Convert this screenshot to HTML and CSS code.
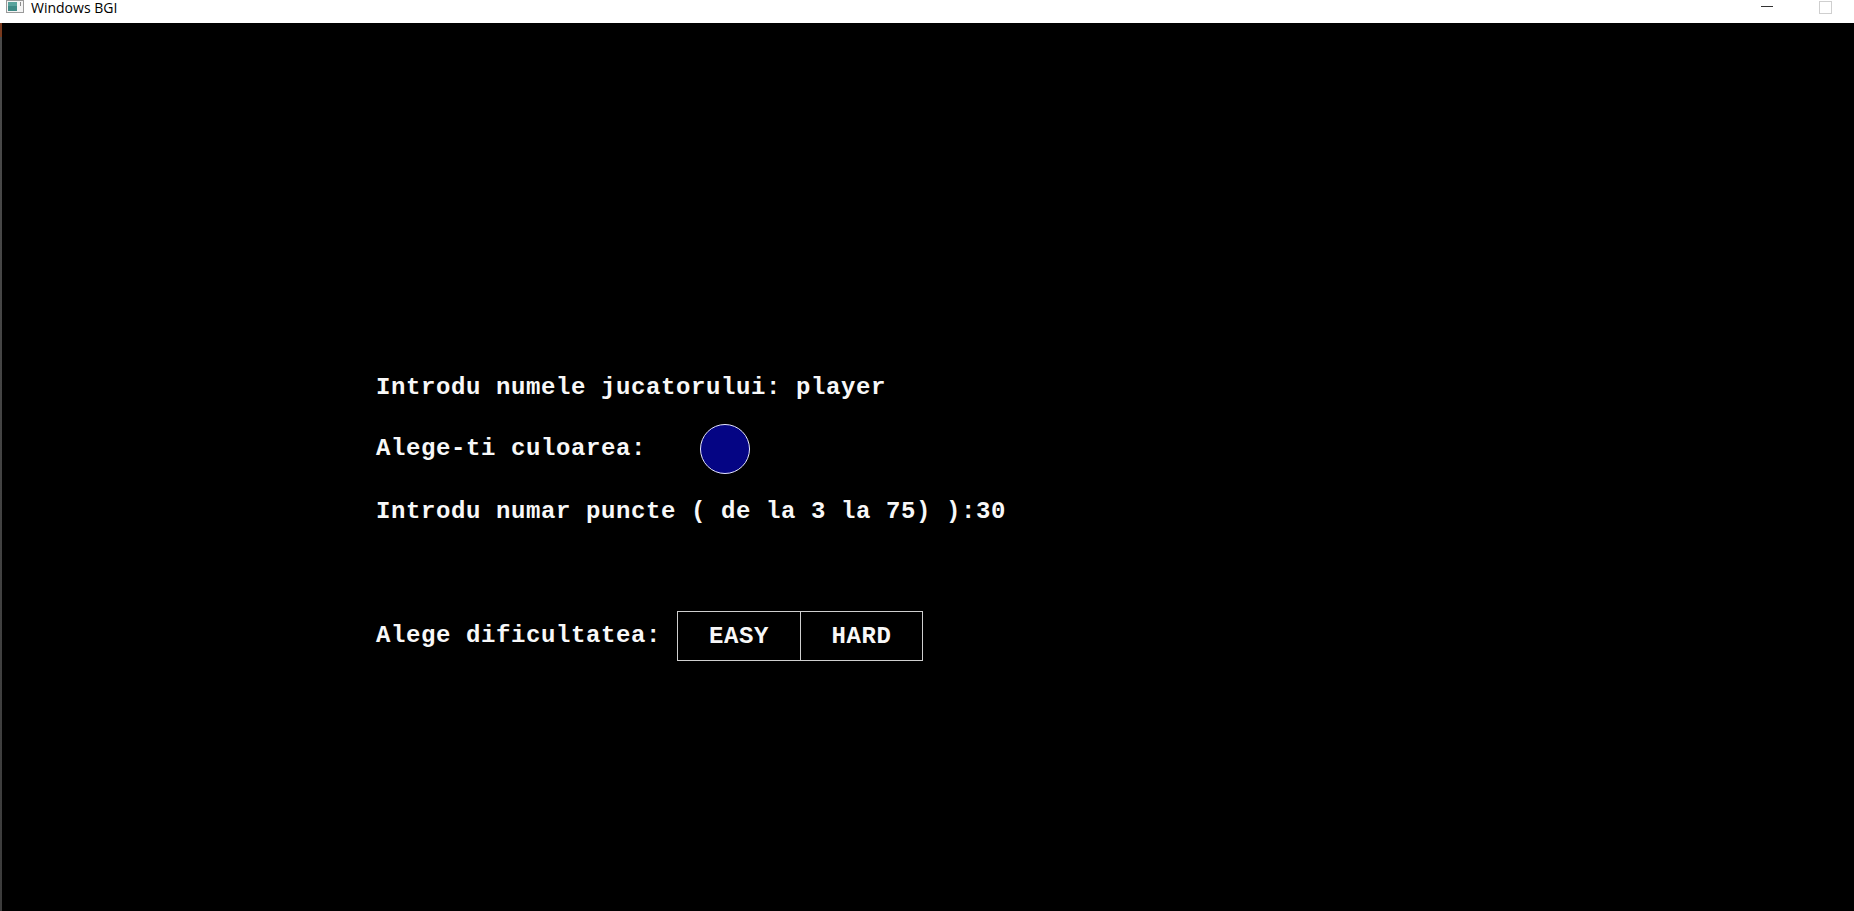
FILE: index.html
```html
<!DOCTYPE html>
<html>
<head>
<meta charset="utf-8">
<title>Windows BGI</title>
<link rel="stylesheet" href="styles.css">
</head>
<body>
<div class="window">
  <div class="titlebar">
    <div class="title-left">
      <svg class="app-icon" width="18" height="13" viewBox="0 0 18 13">
        <rect x="0.5" y="0.5" width="17" height="12" fill="#f4f4f4" stroke="#9a9a9a"/>
        <rect x="2" y="2" width="9" height="9" fill="#3f8a86"/>
        <rect x="2" y="2" width="9" height="4" fill="#5aa39d"/>
        <rect x="14" y="2" width="1" height="4" fill="#8a8a8a"/>
      </svg>
      <span class="title-text">Windows BGI</span>
    </div>
    <div class="title-right">
      <span class="btn-min"></span>
      <span class="btn-max"></span>
    </div>
  </div>
  <div class="body">
    <div class="edge"></div>
    <div class="canvas">
      <div class="row row-name">
        <span class="txt">Introdu numele jucatorului: player</span>
      </div>
      <div class="row row-color">
        <span class="txt">Alege-ti culoarea:</span>
        <span class="dot"></span>
      </div>
      <div class="row row-points">
        <span class="txt">Introdu numar puncte ( de la 3 la 75) ):30</span>
      </div>
      <div class="row row-diff">
        <span class="txt">Alege dificultatea:</span>
        <div class="choices">
          <div class="choice">EASY</div>
          <div class="choice second">HARD</div>
        </div>
      </div>
    </div>
  </div>
</div>
</body>
</html>
```

FILE: styles.css
```css
html, body {
  margin: 0;
  padding: 0;
  background: #000;
  overflow: hidden;
}

.window {
  width: 1854px;
  height: 911px;
  display: flex;
  flex-direction: column;
}

.titlebar {
  height: 23px;
  background: #fff;
  display: flex;
  justify-content: space-between;
  align-items: flex-start;
  flex: none;
}

.title-left {
  display: flex;
  align-items: flex-start;
  padding-left: 6px;
}

.app-icon {
  display: block;
  margin-top: 0;
}

.title-text {
  font-family: "Open Sans", "Noto Sans", sans-serif;
  font-size: 14px;
  line-height: 15px;
  color: #000;
  margin-left: 7px;
}

.title-right {
  display: flex;
  align-items: flex-start;
  padding-right: 22px;
}

.btn-min {
  display: block;
  width: 12px;
  height: 1px;
  background: #333;
  margin-top: 6px;
}

.btn-max {
  display: block;
  width: 11px;
  height: 11px;
  border: 1px solid #cfcfcf;
  margin-left: 46px;
  margin-top: 1px;
}

.body {
  flex: 1;
  display: flex;
  background: #000;
}

.edge {
  width: 2px;
  flex: none;
  background: linear-gradient(#7a3a1e 0, #7a3a1e 14px, #4a4a4a 14px, #3c3c3c 100%);
}

.canvas {
  flex: 1;
  display: flex;
  flex-direction: column;
  padding-left: 374px;
  padding-top: 350px;
  font-family: "Liberation Mono", "Courier New", monospace;
  font-weight: bold;
  font-size: 24px;
  letter-spacing: 0.6px;
  color: #f8f8f8;
}

.row {
  display: flex;
  align-items: center;
}

.txt {
  line-height: 30px;
  white-space: pre;
}

.row-color {
  height: 50px;
  margin-top: 21px;
}

.dot {
  width: 48px;
  height: 48px;
  border-radius: 50%;
  background: #050584;
  border: 1px solid #e6e6ff;
  margin-left: 54px;
}

.row-points {
  margin-top: 23px;
}

.row-diff {
  margin-top: 84px;
}

.choices {
  display: flex;
  margin-left: 16px;
}

.choice {
  box-sizing: border-box;
  width: 124px;
  height: 50px;
  border: 1px solid #cfcfcf;
  display: flex;
  align-items: center;
  justify-content: center;
  line-height: 30px;
  padding-top: 2px;
}

.choice.second {
  width: 123px;
  margin-left: -1px;
}
```
